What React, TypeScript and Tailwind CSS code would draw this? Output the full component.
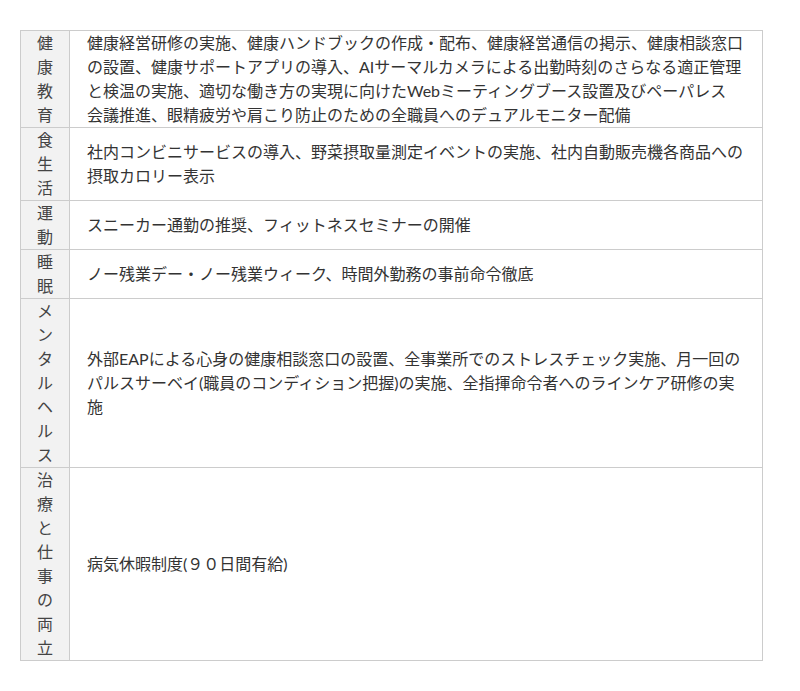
import React from "react";

const rows: { h: string; b: React.ReactNode }[] = [
  {
    h: "健康教育",
    b: (
      <>
        健康経営研修の実施、健康ハンドブックの作成・配布、健康経営通信の掲示、健康相談窓口の設置、健康サポートアプリの導入、AIサーマルカメラによる出勤時刻のさらなる適正管理と検温の実施、適切な働き方の実現に向けたWebミーティングブース設置及びペーパレス
        <br />
        会議推進、眼精疲労や肩こり防止のための全職員へのデュアルモニター配備
      </>
    ),
  },
  {
    h: "食生活",
    b: "社内コンビニサービスの導入、野菜摂取量測定イベントの実施、社内自動販売機各商品への摂取カロリー表示",
  },
  { h: "運動", b: "スニーカー通勤の推奨、フィットネスセミナーの開催" },
  { h: "睡眠", b: "ノー残業デー・ノー残業ウィーク、時間外勤務の事前命令徹底" },
  {
    h: "メンタルヘルス",
    b: "外部EAPによる心身の健康相談窓口の設置、全事業所でのストレスチェック実施、月一回のパルスサーベイ(職員のコンディション把握)の実施、全指揮命令者へのラインケア研修の実施",
  },
  { h: "治療と仕事の両立", b: "病気休暇制度(９０日間有給)" },
];

export default function App() {
  return (
    <div
      className="bg-white w-[800px] h-[691px] pt-[30px] pl-[20px] text-[#333] text-[16px] leading-[24px]"
      style={{ fontFamily: 'Lato, "Noto Sans CJK JP", sans-serif' }}
    >
      <table className="border-collapse w-[743px] table-fixed">
        <colgroup>
          <col className="w-[49px]" />
          <col />
        </colgroup>
        <tbody>
          {rows.map((r) => (
            <tr key={r.h}>
              <td className="border border-[#cccccc] bg-[#f2f2f2] p-0 align-middle text-center text-[#444]">
                <div className="w-[16px] mx-auto break-all">{r.h}</div>
              </td>
              <td className="border border-[#cccccc] py-0 pl-[17px] pr-[18px] align-middle text-[#333]">
                {r.b}
              </td>
            </tr>
          ))}
        </tbody>
      </table>
    </div>
  );
}
